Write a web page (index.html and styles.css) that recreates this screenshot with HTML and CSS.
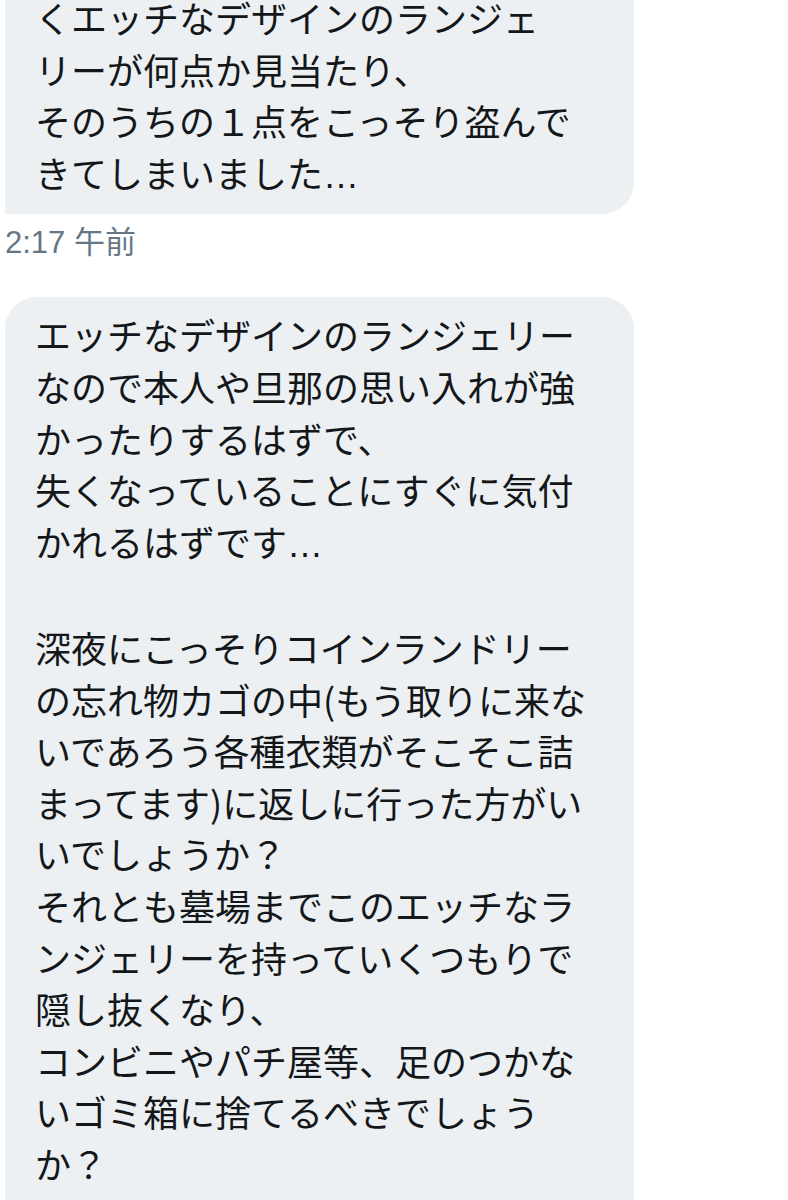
FILE: index.html
```html
<!DOCTYPE html>
<html lang="ja">
<head>
<meta charset="utf-8">
<link rel="stylesheet" href="styles.css">
</head>
<body>
<div class="thread">
  <div class="msg msg-first">
    <p class="text">くエッチなデザインのランジェ<br>リーが何点か見当たり、<br>そのうちの１点をこっそり盗んで<br>きてしまいました<span class="ell">…</span></p>
  </div>
  <div class="time">2:17 午前</div>
  <div class="msg msg-second">
    <p class="text">エッチなデザインのランジェリー<br>なので本人や旦那の思い入れが強<br>かったりするはずで、<br>失くなっていることにすぐに気付<br>かれるはずです<span class="ell">…</span><br><br>深夜にこっそりコインランドリー<br>の忘れ物カゴの中(もう取りに来な<br>いであろう各種衣類がそこそこ詰<br>まってます)に返しに行った方がい<br>いでしょうか？<br>それとも墓場までこのエッチなラ<br>ンジェリーを持っていくつもりで<br>隠し抜くなり、<br>コンビニやパチ屋等、足のつかな<br>いゴミ箱に捨てるべきでしょう<br>か？</p>
  </div>
</div>
</body>
</html>
```

FILE: styles.css
```css
html, body {
  margin: 0;
  padding: 0;
  background: #ffffff;
}

.thread {
  display: flex;
  flex-direction: column;
  align-items: flex-start;
  padding-left: 5px;
}

.msg {
  width: 629px;
  box-sizing: border-box;
  background: #ECF0F2;
  padding: 0 30px;
}

.msg-first {
  margin-top: -8px;
  padding-top: 0;
  padding-bottom: 13px;
  border-radius: 0 0 32px 0;
}

.msg-second {
  margin-top: 37px;
  padding-top: 12px;
  padding-bottom: 40px;
  border-radius: 32px 32px 32px 0;
}

.text {
  margin: 0;
  font-family: "Noto Sans CJK JP", "Noto Sans", sans-serif;
  font-size: 36px;
  line-height: 51.6px;
  color: #14171A;
  white-space: nowrap;
}

.ell {
  font-family: "Liberation Sans", sans-serif;
}

.time {
  margin-top: 12px;
  font-family: "Liberation Sans", "Noto Sans CJK JP", sans-serif;
  font-size: 31px;
  line-height: 34px;
  color: #657786;
}
```
